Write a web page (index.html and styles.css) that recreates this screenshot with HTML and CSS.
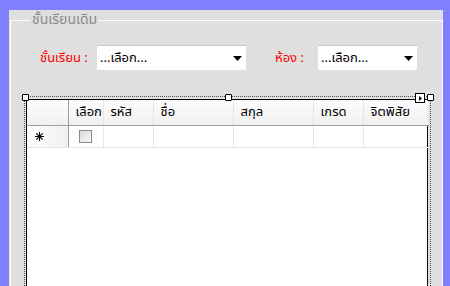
FILE: index.html
```html
<!DOCTYPE html>
<html lang="th">
<head>
<meta charset="utf-8">
<link rel="stylesheet" href="styles.css">
</head>
<body>
<div class="panel">
  <fieldset class="group">
    <legend class="group-title">ชั้นเรียนเดิม</legend>
    <div class="filters">
      <span class="lbl">ชั้นเรียน :</span>
      <div class="select s1"><span>...เลือก...</span><svg class="arrow" width="9" height="5" viewBox="0 0 9 5"><path d="M0 0H9L4.5 5Z" fill="#000"/></svg></div>
      <span class="lbl lbl2">ห้อง :</span>
      <div class="select s2"><span>...เลือก...</span><svg class="arrow" width="9" height="5" viewBox="0 0 9 5"><path d="M0 0H9L4.5 5Z" fill="#000"/></svg></div>
    </div>
    <div class="design">
      <span class="handle h-tl"></span>
      <span class="handle h-tm"></span>
      <span class="handle h-tr"></span>
      <span class="smart"><svg width="3" height="5" viewBox="0 0 3 5"><path d="M0 0L3 2.5L0 5Z" fill="#000"/></svg></span>
      <div class="grid">
        <table>
          <thead>
            <tr>
              <th class="rh"></th>
              <th class="c1">เลือก</th>
              <th class="c2">รหัส</th>
              <th class="c3">ชื่อ</th>
              <th class="c4">สกุล</th>
              <th class="c5">เกรด</th>
              <th class="c6">จิตพิสัย</th>
            </tr>
          </thead>
          <tbody>
            <tr>
              <td class="rh"><svg class="star" width="9" height="9" viewBox="0 0 9 9"><path d="M4.5 0V9M0 4.5H9M1.3 1.3L7.7 7.7M7.7 1.3L1.3 7.7" stroke="#000" stroke-width="1.1"/></svg></td>
              <td class="chk"><span class="box"></span></td>
              <td></td><td></td><td></td><td></td><td></td>
            </tr>
          </tbody>
        </table>
      </div>
    </div>
  </fieldset>
</div>
</body>
</html>
```
FILE: styles.css
```css
html, body {
  margin: 0;
  padding: 0;
  background: #8080ff;
  overflow: hidden;
}
body {
  width: 450px;
  height: 286px;
  font-family: Tahoma, "Noto Sans Thai", "Noto Sans", "DejaVu Sans", sans-serif;
  font-size: 13px;
}
.panel {
  margin: 10px 0 0 9px;
  width: 434px;
  height: 276px;
  background: #dfdfdf;
  padding-top: 1px;
  box-sizing: border-box;
  overflow: hidden;
}
.group {
  margin: 0 0 0 1px;
  width: 433px;
  height: 290px;
  box-sizing: border-box;
  border: 1px solid #fff;
  padding: 0 0 0 13px;
}
.group-title {
  color: #8a8a8a;
  padding: 0 2px;
  margin-left: 6px;
  line-height: 18px;
  font-size: 14px;
}
.filters {
  display: flex;
  align-items: center;
  margin-top: 16px;
  height: 25px;
}
.lbl {
  color: #ff0000;
  margin-left: 16px;
  width: 57px;
  font-size: 13px;
}
.lbl2 {
  margin-left: 29px;
  width: 43px;
}
.select {
  height: 25px;
  box-sizing: border-box;
  background: #fff;
  border-top: 1px solid #c8c8c8;
  display: flex;
  align-items: center;
  justify-content: space-between;
  padding: 0 4px 0 3px;
  font-size: 13px;
  color: #000;
}
.s1 { width: 149px; }
.s2 { width: 99px; }
.arrow { margin-top: 1px; }
.design {
  position: relative;
  margin-top: 26px;
  width: 407px;
  height: 200px;
  border-top: 1px dotted #555;
  border-left: 1px dotted #555;
  border-right: 1px dotted #555;
  box-sizing: border-box;
  padding: 2px 2px 0 1px;
}
.handle {
  position: absolute;
  width: 5px;
  height: 5px;
  background: #fff;
  border: 1px solid #000;
  border-radius: 1px;
}
.h-tl { left: -3px; top: -3px; }
.h-tm { left: 200px; top: -3px; }
.h-tr { right: -4px; top: -3px; }
.smart {
  position: absolute;
  right: 5px;
  top: -4px;
  width: 8px;
  height: 8px;
  background: #fff;
  border: 1px solid #000;
  display: flex;
  align-items: center;
  justify-content: center;
}
.grid {
  background: #fff;
  border: 1px solid #000;
  height: 200px;
  box-sizing: border-box;
}
table {
  border-collapse: collapse;
  table-layout: fixed;
  width: 400px;
}
th {
  height: 25px;
  padding: 0 0 0 7px;
  text-align: left;
  font-weight: normal;
  font-size: 13px;
  color: #000;
  background: linear-gradient(#fdfdfd, #f0f0f0);
  border-right: 1px solid #e6e6e6;
  border-bottom: 1px solid #a0a0a0;
  box-sizing: border-box;
}
th.rh, td.rh {
  width: 41px;
  border-right: 1px solid #a0a0a0;
}
td.rh {
  background: linear-gradient(90deg, #fdfdfd, #f0f0f0);
  padding-left: 8px;
}
.star { display: block; }
.c1 { width: 35px; }
.c2 { width: 50px; }
.c3 { width: 80px; }
.c4 { width: 80px; }
.c5 { width: 50px; }
.c6 { width: 65px; }
td {
  height: 22px;
  padding: 0;
  border-right: 1px solid #e6e6e6;
  border-bottom: 1px solid #e6e6e6;
  box-sizing: border-box;
}
.chk { padding-left: 10px; }
.box {
  display: block;
  width: 11px;
  height: 11px;
  border: 1px solid #8a8a8a;
  background: linear-gradient(135deg, #d8d8d8, #f8f8f8);
}
```
